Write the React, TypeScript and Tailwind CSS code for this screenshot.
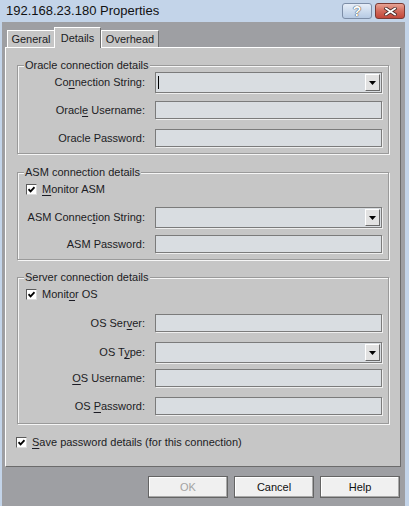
import type { ReactNode } from 'react';

const font = "font-['Liberation_Sans',Arial,sans-serif]";

/** Label with one underlined access-key character. */
function Acc({ t, k }: { t: string; k: number }) {
  return (
    <>
      {t.slice(0, k)}
      <span className="underline underline-offset-[2px]">{t[k]}</span>
      {t.slice(k + 1)}
    </>
  );
}

function TextBox({ combo, caret }: { combo?: boolean; caret?: boolean }) {
  return (
    <div
      className={`flex w-[227px] items-center border border-[#7b7b7b] bg-[#d9dde1] shadow-[1px_1px_0_#eeeeee] ${
        combo ? 'h-[21px]' : 'h-[18px]'
      }`}
    >
      {caret && <div className="ml-[2px] h-[13px] w-px bg-black" />}
      {combo && (
        <div className="ml-auto mr-px flex h-[17px] w-[15px] items-center justify-center border border-t-white border-l-white border-r-[#696969] border-b-[#696969] bg-[#e2e2e2]">
          <svg width="7" height="4" viewBox="0 0 7 4">
            <path d="M0 0h7L3.5 4z" fill="#000" />
          </svg>
        </div>
      )}
    </div>
  );
}

function Row({ label, className = '', children }: { label: ReactNode; className?: string; children: ReactNode }) {
  return (
    <div className={`flex items-center ${className}`}>
      <div className="w-[127px] text-right">{label}</div>
      <div className="ml-[10px]">{children}</div>
    </div>
  );
}

function Check({ label, className = '' }: { label: ReactNode; className?: string }) {
  return (
    <div className={`flex h-[13px] items-center ${className}`}>
      <div className="flex h-[11px] w-[11px] items-center justify-center border border-t-[#5a5a5a] border-l-[#5a5a5a] border-r-[#dcdcdc] border-b-[#dcdcdc] bg-white">
        <svg width="7" height="7" viewBox="0 0 7 7">
          <path d="M0.5 3.2 2.6 5.4 6.5 1.2" fill="none" stroke="#000" strokeWidth="1.8" />
        </svg>
      </div>
      <span className="ml-[5px]">{label}</span>
    </div>
  );
}

function Group({ title, className = '', children }: { title: string; className?: string; children: ReactNode }) {
  return (
    <fieldset
      className={`mx-[11px] flex flex-col border border-[#9a9a9a] shadow-[inset_1px_1px_0_#f6f6f6,1px_1px_0_#f6f6f6] ${className}`}
    >
      <legend className="ml-[6px] bg-[#c6c6c6] px-px leading-[14px]">{title}</legend>
      {children}
    </fieldset>
  );
}

function Btn({ children, disabled }: { children: ReactNode; disabled?: boolean }) {
  return (
    <div
      className={`flex h-[22px] w-[80px] items-center justify-center border border-[#646464] bg-[#f0f0f0] shadow-[inset_-1px_-1px_0_#a9a9a9,inset_1px_1px_0_#ffffff] ${
        disabled ? 'text-[#a3a3a3]' : 'text-[#111]'
      }`}
    >
      {children}
    </div>
  );
}

export default function App() {
  return (
    <div className={`flex h-[506px] w-[409px] flex-col overflow-hidden bg-[#c3d4e9] text-[11px] text-[#1c1c24] ${font}`}>
      {/* title bar */}
      <div className="flex h-[22px] shrink-0 items-center pl-[6px] pr-[4px]">
        <span className="text-[13px] text-[#111]">192.168.23.180 Properties</span>
        <div className="ml-auto flex gap-[3px] self-start pt-[3px]">
          <div className="flex h-[16px] w-[30px] items-center justify-center rounded-[3px] border border-[#7d8ea7] bg-gradient-to-b from-[#e6eef8] to-[#b6cae3] text-[14px] font-bold leading-none text-white [text-shadow:0_0_1px_#333,0_0_1px_#333]">
            ?
          </div>
          <div className="flex h-[16px] w-[30px] items-center justify-center rounded-[3px] border border-[#7a3a34] bg-gradient-to-b from-[#e7a396] via-[#d26a5b] to-[#c2463a]">
            <svg width="13" height="9" viewBox="0 0 13 9">
              <path d="M2 1.5 11 7.5M11 1.5 2 7.5" stroke="#4a2a28" strokeWidth="3.4" strokeLinecap="square" />
              <path d="M2 1.5 11 7.5M11 1.5 2 7.5" stroke="#fff" strokeWidth="1.8" strokeLinecap="square" />
            </svg>
          </div>
        </div>
      </div>

      {/* window body */}
      <div className="ml-[2px] mr-[4px] flex flex-1 flex-col bg-[#9e9fa3] pl-[3px] pr-[4px] pt-[5px]">
        {/* tabs */}
        <div className="flex h-[20px] items-end pl-[2px]">
          <div className="flex h-[17px] w-[48px] items-center justify-center border border-b-0 border-t-white border-l-white border-r-[#6e6e6e] bg-[#c6c6c6]">
            General
          </div>
          <div className="relative z-10 -mb-px -ml-px flex h-[21px] w-[47px] items-center justify-center border border-b-0 border-t-white border-l-white border-r-[#6e6e6e] bg-[#c6c6c6]">
            Details
          </div>
          <div className="flex h-[17px] w-[58px] items-center justify-center border border-b-0 border-t-white border-l-white border-r-[#6e6e6e] bg-[#c6c6c6]">
            Overhead
          </div>
        </div>

        {/* tab panel */}
        <div className="flex h-[420px] flex-col border border-t-white border-l-white border-r-[#6b6b6b] border-b-[#6b6b6b] bg-[#c6c6c6]">
          <Group title="Oracle connection details" className="mt-[10px] pb-[6px]">
            <Row label={<Acc t="Connection String:" k={2} />}>
              <TextBox combo caret />
            </Row>
            <Row label={<Acc t="Oracle Username:" k={5} />} className="mt-[8px]">
              <TextBox />
            </Row>
            <Row label="Oracle Password:" className="mt-[10px]">
              <TextBox />
            </Row>
          </Group>

          <Group title="ASM connection details" className="mt-[11px] pb-[6px]">
            <Check label={<Acc t="Monitor ASM" k={0} />} className="ml-[8px] mt-[4px]" />
            <Row label={<Acc t="ASM Connection String:" k={10} />} className="mt-[11px]">
              <TextBox combo />
            </Row>
            <Row label="ASM Password:" className="mt-[7px]">
              <TextBox />
            </Row>
          </Group>

          <Group title="Server connection details" className="mt-[10px] pb-[8px]">
            <Check label={<Acc t="Monitor OS" k={5} />} className="ml-[8px] mt-[4px]" />
            <Row label={<Acc t="OS Server:" k={6} />} className="mt-[13px]">
              <TextBox />
            </Row>
            <Row label={<Acc t="OS Type:" k={4} />} className="mt-[10px]">
              <TextBox combo />
            </Row>
            <Row label={<Acc t="OS Username:" k={0} />} className="mt-[6px]">
              <TextBox />
            </Row>
            <Row label={<Acc t="OS Password:" k={3} />} className="mt-[10px]">
              <TextBox />
            </Row>
          </Group>

          <Check label={<Acc t="Save password details (for this connection)" k={0} />} className="ml-[10px] mt-[12px]" />
        </div>

        {/* buttons */}
        <div className="mt-[9px] flex justify-end gap-[6px] pr-px">
          <Btn disabled>OK</Btn>
          <Btn>Cancel</Btn>
          <Btn>Help</Btn>
        </div>
      </div>
    </div>
  );
}
